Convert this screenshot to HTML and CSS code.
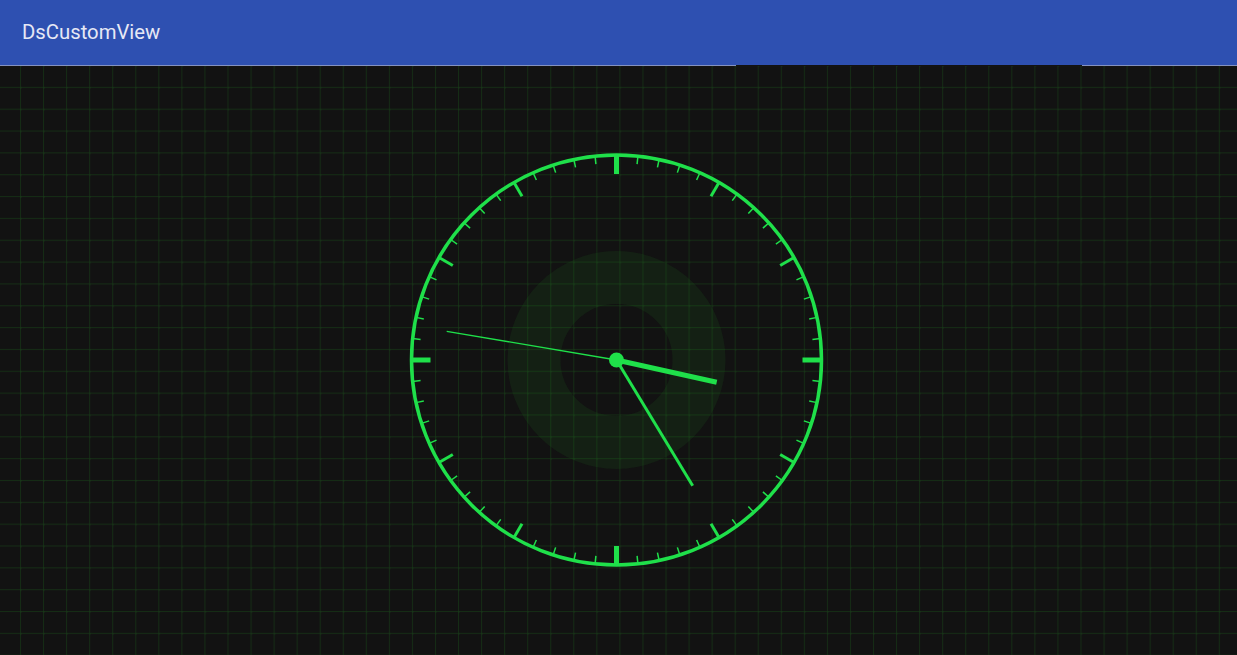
FILE: index.html
```html
<!DOCTYPE html>
<html lang="en">
<head>
<meta charset="utf-8">
<title>DsCustomView</title>
<link rel="stylesheet" href="styles.css">
</head>
<body>
<div class="app">
  <header class="toolbar">
    <span class="title">DsCustomView</span>
  </header>
  <div class="toolbar-edge"></div>
  <main class="canvas">
    <svg class="clock" width="1237" height="589" viewBox="0 66 1237 589" xmlns="http://www.w3.org/2000/svg">
      <defs>
        <pattern id="grid" x="0" y="0" width="23.054" height="21.84" patternUnits="userSpaceOnUse" patternTransform="translate(20 65)">
          <rect class="grid-line" x="0" y="0" width="1" height="21.84"/>
          <rect class="grid-line" x="0" y="0" width="23.054" height="1"/>
          <rect class="grid-dot" x="-0.5" y="-0.5" width="2" height="2"/>
        </pattern>
        <line id="tm" x1="616.5" y1="155" x2="616.5" y2="163"/>
        <line id="th" x1="616.5" y1="155" x2="616.5" y2="171"/>
        <line id="tq" x1="616.5" y1="155" x2="616.5" y2="174"/>
      </defs>
      <rect x="0" y="66" width="1237" height="589" fill="url(#grid)"/>
      <circle class="halo" cx="616.5" cy="360" r="82.5"/>
      <circle class="rim" cx="616.5" cy="360" r="205"/>
      <g class="tick-minor">
        <use href="#tm" transform="rotate(6 616.5 360)"/>
        <use href="#tm" transform="rotate(12 616.5 360)"/>
        <use href="#tm" transform="rotate(18 616.5 360)"/>
        <use href="#tm" transform="rotate(24 616.5 360)"/>
        <use href="#tm" transform="rotate(36 616.5 360)"/>
        <use href="#tm" transform="rotate(42 616.5 360)"/>
        <use href="#tm" transform="rotate(48 616.5 360)"/>
        <use href="#tm" transform="rotate(54 616.5 360)"/>
        <use href="#tm" transform="rotate(66 616.5 360)"/>
        <use href="#tm" transform="rotate(72 616.5 360)"/>
        <use href="#tm" transform="rotate(78 616.5 360)"/>
        <use href="#tm" transform="rotate(84 616.5 360)"/>
        <use href="#tm" transform="rotate(96 616.5 360)"/>
        <use href="#tm" transform="rotate(102 616.5 360)"/>
        <use href="#tm" transform="rotate(108 616.5 360)"/>
        <use href="#tm" transform="rotate(114 616.5 360)"/>
        <use href="#tm" transform="rotate(126 616.5 360)"/>
        <use href="#tm" transform="rotate(132 616.5 360)"/>
        <use href="#tm" transform="rotate(138 616.5 360)"/>
        <use href="#tm" transform="rotate(144 616.5 360)"/>
        <use href="#tm" transform="rotate(156 616.5 360)"/>
        <use href="#tm" transform="rotate(162 616.5 360)"/>
        <use href="#tm" transform="rotate(168 616.5 360)"/>
        <use href="#tm" transform="rotate(174 616.5 360)"/>
        <use href="#tm" transform="rotate(186 616.5 360)"/>
        <use href="#tm" transform="rotate(192 616.5 360)"/>
        <use href="#tm" transform="rotate(198 616.5 360)"/>
        <use href="#tm" transform="rotate(204 616.5 360)"/>
        <use href="#tm" transform="rotate(216 616.5 360)"/>
        <use href="#tm" transform="rotate(222 616.5 360)"/>
        <use href="#tm" transform="rotate(228 616.5 360)"/>
        <use href="#tm" transform="rotate(234 616.5 360)"/>
        <use href="#tm" transform="rotate(246 616.5 360)"/>
        <use href="#tm" transform="rotate(252 616.5 360)"/>
        <use href="#tm" transform="rotate(258 616.5 360)"/>
        <use href="#tm" transform="rotate(264 616.5 360)"/>
        <use href="#tm" transform="rotate(276 616.5 360)"/>
        <use href="#tm" transform="rotate(282 616.5 360)"/>
        <use href="#tm" transform="rotate(288 616.5 360)"/>
        <use href="#tm" transform="rotate(294 616.5 360)"/>
        <use href="#tm" transform="rotate(306 616.5 360)"/>
        <use href="#tm" transform="rotate(312 616.5 360)"/>
        <use href="#tm" transform="rotate(318 616.5 360)"/>
        <use href="#tm" transform="rotate(324 616.5 360)"/>
        <use href="#tm" transform="rotate(336 616.5 360)"/>
        <use href="#tm" transform="rotate(342 616.5 360)"/>
        <use href="#tm" transform="rotate(348 616.5 360)"/>
        <use href="#tm" transform="rotate(354 616.5 360)"/>
      </g>
      <g class="tick-hour">
        <use href="#th" transform="rotate(30 616.5 360)"/>
        <use href="#th" transform="rotate(60 616.5 360)"/>
        <use href="#th" transform="rotate(120 616.5 360)"/>
        <use href="#th" transform="rotate(150 616.5 360)"/>
        <use href="#th" transform="rotate(210 616.5 360)"/>
        <use href="#th" transform="rotate(240 616.5 360)"/>
        <use href="#th" transform="rotate(300 616.5 360)"/>
        <use href="#th" transform="rotate(330 616.5 360)"/>
      </g>
      <g class="tick-major">
        <use href="#tq"/>
        <use href="#tq" transform="rotate(90 616.5 360)"/>
        <use href="#tq" transform="rotate(180 616.5 360)"/>
        <use href="#tq" transform="rotate(270 616.5 360)"/>
      </g>
      <line class="hand-second" x1="446.7" y1="331.3" x2="616.5" y2="360"/>
      <line class="hand-minute" x1="616.5" y1="360" x2="692.7" y2="485.7"/>
      <line class="hand-hour" x1="616.5" y1="360" x2="716.7" y2="382.3"/>
      <circle class="hub" cx="616.5" cy="360" r="7.5"/>
    </svg>
  </main>
</div>
</body>
</html>
```
FILE: styles.css
```css
html, body {
  margin: 0;
  padding: 0;
  background: #121212;
}

.app {
  width: 1237px;
  height: 655px;
  display: flex;
  flex-direction: column;
  overflow: hidden;
}

.toolbar {
  height: 65px;
  background: #2e50b1;
  display: flex;
  align-items: center;
  padding: 0 0 2px 22px;
  box-sizing: border-box;
  flex: none;
}

.title {
  font-family: Roboto, "Noto Sans", sans-serif;
  font-size: 20.3px;
  color: #e6e8f5;
  letter-spacing: 0;
}

.toolbar-edge {
  height: 1px;
  flex: none;
  background: linear-gradient(to right,
    #8492c0 0, #8492c0 736px,
    #121212 736px, #121212 1082px,
    #8492c0 1082px, #8492c0 100%);
}

.canvas {
  flex: 1;
  background: #121212;
}

.clock {
  display: block;
}

.grid-line {
  fill: #152c15;
}

.grid-dot {
  fill: #183518;
}

.halo {
  fill: none;
  stroke: rgba(40, 160, 40, 0.1);
  stroke-width: 53;
}

.rim {
  fill: none;
  stroke: #1fe04a;
  stroke-width: 3.5;
}

.tick-minor {
  stroke: #1fe04a;
  stroke-width: 1.5;
}

.tick-hour {
  stroke: #1fe04a;
  stroke-width: 3;
}

.tick-major {
  stroke: #1fe04a;
  stroke-width: 5;
}

.hand-second {
  stroke: #1fe04a;
  stroke-width: 1.3;
}

.hand-minute {
  stroke: #1fe04a;
  stroke-width: 3;
}

.hand-hour {
  stroke: #1fe04a;
  stroke-width: 5;
}

.hub {
  fill: #1fe04a;
}
```
